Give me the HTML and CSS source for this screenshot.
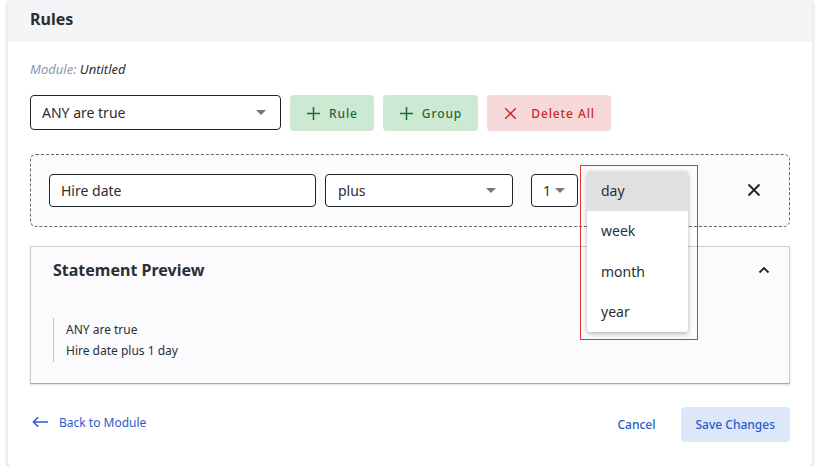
FILE: index.html
```html
<!DOCTYPE html>
<html lang="en">
<head>
    <meta charset="UTF-8" />
    <title>Rules</title>
    <link rel="stylesheet" href="styles.css">
</head>
<body>
    <div class="card">
        <div class="card-header">Rules</div>
        <div class="card-body">
            <div class="module-line"><span class="module-label">Module:</span> Untitled</div>

            <div class="toolbar">
                <div class="select select-match">
                    <span>ANY are true</span>
                    <span class="caret"></span>
                </div>
                <button class="btn btn-green">
                    <svg viewBox="0 0 16 16" width="15" height="15"><path d="M8 1v14M1 8h14" stroke="currentColor" stroke-width="1.6" fill="none"/></svg>
                    Rule
                </button>
                <button class="btn btn-green">
                    <svg viewBox="0 0 16 16" width="15" height="15"><path d="M8 1v14M1 8h14" stroke="currentColor" stroke-width="1.6" fill="none"/></svg>
                    Group
                </button>
                <button class="btn btn-red">
                    <svg viewBox="0 0 16 16" width="13" height="13"><path d="M1.5 1.5l13 13M14.5 1.5l-13 13" stroke="currentColor" stroke-width="1.8" fill="none"/></svg>
                    Delete All
                </button>
            </div>

            <div class="rule-box">
                <div class="field field-name">Hire date</div>
                <div class="select field-op">
                    <span>plus</span>
                    <span class="caret"></span>
                </div>
                <div class="select field-num">
                    <span>1</span>
                    <span class="caret"></span>
                </div>
                <button class="remove-btn" aria-label="Remove rule">
                    <svg viewBox="0 0 14 14" width="14" height="14"><path d="M1.5 1.5l11 11M12.5 1.5l-11 11" stroke="#222" stroke-width="1.8" fill="none"/></svg>
                </button>

                <div class="highlight"></div>
                <ul class="menu">
                    <li class="menu-item active">day</li>
                    <li class="menu-item">week</li>
                    <li class="menu-item">month</li>
                    <li class="menu-item">year</li>
                </ul>
            </div>

            <div class="preview">
                <div class="preview-head">
                    <span class="preview-title">Statement Preview</span>
                    <svg viewBox="0 0 12 8" width="12" height="8"><path d="M1.5 6.5L6 2l4.5 4.5" stroke="#222" stroke-width="1.8" fill="none"/></svg>
                </div>
                <div class="statement">
                    <div>ANY are true</div>
                    <div>Hire date plus 1 day</div>
                </div>
            </div>

            <div class="footer">
                <a class="back-link" href="#">
                    <svg viewBox="0 0 18 12" width="17" height="12"><path d="M17 6H1.5M6.5 1L1.5 6l5 5" stroke="currentColor" stroke-width="1.6" fill="none"/></svg>
                    Back to Module
                </a>
                <div class="footer-actions">
                    <button class="link-btn">Cancel</button>
                    <button class="btn btn-blue">Save Changes</button>
                </div>
            </div>
        </div>
    </div>
</body>
</html>
```

FILE: styles.css
```css
body {
    margin: 0;
    background: #ffffff;
    font-family: "Noto Sans", "Open Sans", sans-serif;
    color: #2b2e33;
}
.card {
    margin: 0 7px;
    width: 806px;
    background: #fff;
    border-left: 1px solid #eceef1;
    border-right: 1px solid #eceef1;
    box-shadow: 0 2px 3px rgba(0,0,0,0.22);
    border-radius: 0 0 4px 4px;
    box-sizing: border-box;
}
.card-header {
    height: 42px;
    background: #f5f5f7;
    padding-left: 22px;
    font-size: 16px;
    font-weight: 700;
    line-height: 38px;
    color: #2b2e33;
}
.card-body {
    padding: 0 22px 24px 22px;
}
.module-line {
    margin-top: 18px;
    font-size: 13px;
    font-style: italic;
    line-height: 18px;
    color: #2b2e33;
}
.module-label {
    color: #8c97a8;
}
.toolbar {
    display: flex;
    align-items: flex-start;
    gap: 9px;
    margin-top: 17px;
}
.select {
    display: flex;
    align-items: center;
    justify-content: space-between;
    box-sizing: border-box;
    border: 1px solid #1f2328;
    border-radius: 4px;
    background: #fff;
    font-size: 14px;
    color: #2b2e33;
}
.select-match {
    width: 251px;
    height: 35px;
    padding: 0 14px 0 11px;
}
.caret {
    width: 0;
    height: 0;
    border-left: 5px solid transparent;
    border-right: 5px solid transparent;
    border-top: 5px solid #777;
}
.btn {
    display: flex;
    align-items: center;
    gap: 8px;
    height: 36px;
    border: none;
    border-radius: 4px;
    font-family: inherit;
    font-size: 12px;
    font-weight: 500;
    letter-spacing: 0.9px;
    cursor: pointer;
}
.btn-green {
    background: #cde8d3;
    color: #1d6b39;
    padding: 0 16px 0 16px;
}
.btn-red {
    background: #f6d8d8;
    color: #c62a2a;
    padding: 0 16px 0 17px;
    gap: 14px;
}
.btn-blue {
    background: #dce7f8;
    color: #2a5ccc;
    letter-spacing: 0;
    font-weight: 500;
    padding: 0 15px;
    height: 35px;
}
.rule-box {
    position: relative;
    margin-top: 23px;
    height: 73px;
    box-sizing: border-box;
    border: 1px dashed #666;
    border-radius: 6px;
    background: #fbfbfe;
    padding: 19px 18px;
    display: flex;
    align-items: flex-start;
    gap: 9px;
}
.field {
    box-sizing: border-box;
    border: 1px solid #1f2328;
    border-radius: 4px;
    background: #fff;
    font-size: 14px;
    height: 33px;
    line-height: 31px;
}
.field-name {
    width: 267px;
    padding-left: 11px;
}
.field-op {
    width: 188px;
    height: 33px;
    padding: 0 16px 0 12px;
}
.field-num {
    width: 47px;
    height: 33px;
    margin-left: 9px;
    padding: 0 12px 0 11px;
    justify-content: flex-start;
    gap: 4px;
}
.remove-btn {
    margin-left: auto;
    margin-right: 10px;
    margin-top: 9px;
    border: none;
    background: none;
    padding: 0;
    width: 14px;
    height: 14px;
    display: flex;
}
.highlight {
    position: absolute;
    left: 549px;
    top: 10px;
    width: 118px;
    height: 175px;
    border: 1px solid #e8322f;
    box-sizing: border-box;
    z-index: 3;
}
.menu {
    position: absolute;
    left: 556px;
    top: 16px;
    width: 101px;
    margin: 0;
    padding: 0;
    list-style: none;
    background: #fff;
    border-radius: 3px;
    box-shadow: 0 2px 5px rgba(0,0,0,0.25), 0 0 2px rgba(0,0,0,0.1);
    overflow: hidden;
    z-index: 2;
}
.menu-item {
    height: 40.25px;
    line-height: 40px;
    padding-left: 14px;
    font-size: 14px;
    color: #2b2e33;
}
.menu-item.active {
    background: #e0e0e0;
}
.preview {
    margin-top: 19px;
    height: 138px;
    box-sizing: border-box;
    border: 1px solid #c9d0da;
    border-bottom-color: #a3a9b3;
    background: #fbfbfe;
    box-shadow: 0 1px 2px rgba(0,0,0,0.15);
    padding: 12px 19px 0 22px;
}
.preview-head {
    display: flex;
    align-items: center;
    justify-content: space-between;
    height: 22px;
}
.preview-title {
    font-size: 16px;
    font-weight: 700;
}
.statement {
    margin-top: 37px;
    border-left: 1px solid #c4c8ce;
    padding: 1px 0 1px 12px;
    font-size: 12px;
    line-height: 21px;
    color: #2b2e33;
}
.footer {
    margin-top: 23px;
    display: flex;
    align-items: center;
    justify-content: space-between;
}
.back-link {
    display: flex;
    align-items: center;
    gap: 10px;
    color: #2a5ccc;
    font-size: 12px;
    text-decoration: none;
    margin-left: 2px;
    margin-top: -5px;
}
.footer-actions {
    display: flex;
    align-items: center;
    gap: 25px;
}
.link-btn {
    border: none;
    background: none;
    font-family: inherit;
    font-size: 12px;
    font-weight: 500;
    color: #2a5ccc;
    padding: 0;
    cursor: pointer;
}
```
